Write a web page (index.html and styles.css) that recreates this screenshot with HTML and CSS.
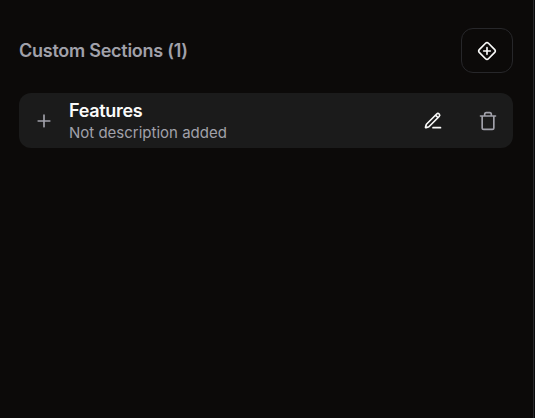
FILE: index.html
```html
<!DOCTYPE html>
<html lang="en">
<head>
<meta charset="utf-8">
<title>Custom Sections</title>
<link rel="stylesheet" href="styles.css">
</head>
<body>
<main class="panel">
  <header class="header">
    <h2 class="heading">Custom Sections (1)</h2>
    <button class="add" aria-label="Add section">
      <svg class="icon" viewBox="0 0 24 24"><path d="M12 8v8M8 12h8"/><path d="M2.7 10.3a2.41 2.41 0 0 0 0 3.41l7.59 7.59a2.41 2.41 0 0 0 3.41 0l7.59-7.59a2.41 2.41 0 0 0 0-3.41L13.7 2.71a2.41 2.41 0 0 0-3.41 0z"/></svg>
    </button>
  </header>
  <section class="card">
    <svg class="icon plus" viewBox="0 0 24 24"><path d="M5 12h14M12 5v14"/></svg>
    <div class="text">
      <h3 class="title">Features</h3>
      <p class="description">Not description added</p>
    </div>
    <div class="actions">
      <svg class="icon" viewBox="0 0 24 24"><path d="M12 20h9M16.376 3.622a1 1 0 0 1 3.002 3.002L7.368 18.635a2 2 0 0 1-.855.506l-2.872.838a.5.5 0 0 1-.62-.62l.838-2.872a2 2 0 0 1 .506-.854zM15 5l3 3"/></svg>
      <svg class="icon trash" viewBox="0 0 24 24"><path d="M3 6h18M19 6v14c0 1-1 2-2 2H7c-1 0-2-1-2-2V6M8 6V4c0-1 1-2 2-2h4c1 0 2 1 2 2v2"/></svg>
    </div>
  </section>
</main>
</body>
</html>
```
FILE: styles.css
```css
* { box-sizing: border-box; }
body {
  margin: 0;
  background: #09090b;
  color: #fafaf9;
  font-family: Inter, "Liberation Sans", sans-serif;
}
.panel {
  width: 534px;
  height: 418px;
  padding: 28px 20px 0 19px;
  background: #0c0a09;
  border-right: 1px solid #27272a;
}
.header {
  display: flex;
  align-items: center;
  justify-content: space-between;
  height: 45px;
  margin-bottom: 20px;
}
.heading {
  margin: 0;
  padding-top: 1px;
  font-size: 18px;
  line-height: 28px;
  font-weight: 600;
  letter-spacing: -0.26px;
  color: #a1a1aa;
}
.add {
  display: grid;
  place-items: center;
  width: 52px;
  height: 45px;
  padding: 0;
  border: 1px solid #27272a;
  border-radius: 12px;
  background: transparent;
  color: #fafaf9;
}
.icon {
  display: block;
  width: 20px;
  height: 20px;
  fill: none;
  stroke: currentColor;
  stroke-width: 2;
  stroke-linecap: round;
  stroke-linejoin: round;
}
.card {
  display: flex;
  align-items: center;
  height: 55px;
  padding: 0 15px;
  border-radius: 12px;
  background: #1b1b1b;
}
.plus {
  margin-right: 15px;
  color: #a1a1aa;
}
.text {
  flex: 1;
  padding-top: 2px;
}
.title {
  margin: 0;
  font-size: 18px;
  line-height: 22px;
  font-weight: 600;
  letter-spacing: -0.3px;
}
.description {
  margin: 0;
  font-size: 15px;
  line-height: 22px;
  color: #a1a1aa;
}
.actions {
  display: flex;
  gap: 35px;
}
.trash { color: #a1a1aa; }
```
